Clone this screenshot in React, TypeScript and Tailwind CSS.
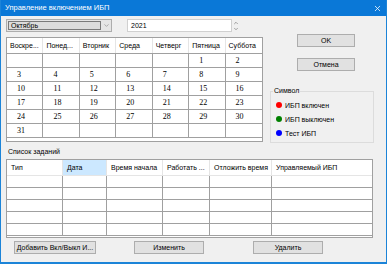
import { X, ChevronDown, ChevronUp } from 'lucide-react';

const days = ['Воскре...', 'Понед...', 'Вторник', 'Среда', 'Четверг', 'Пятница', 'Суббота'];

// October 2021 starts on Friday
const weeks: (number | null)[][] = [
  [null, null, null, null, null, 1, 2],
  [3, 4, 5, 6, 7, 8, 9],
  [10, 11, 12, 13, 14, 15, 16],
  [17, 18, 19, 20, 21, 22, 23],
  [24, 25, 26, 27, 28, 29, 30],
  [31, null, null, null, null, null, null],
];

const taskCols = [
  { title: 'Тип', w: 'w-[56px]' },
  { title: 'Дата', w: 'w-[44px]', active: true },
  { title: 'Время начала', w: 'w-[56px]' },
  { title: 'Работать ...', w: 'w-[47px]' },
  { title: 'Отложить время', w: 'w-[62px]' },
  { title: 'Управляемый ИБП', w: 'flex-1' },
];

function Btn({ label, className }: { label: string; className: string }) {
  return (
    <div
      className={`flex h-[13px] items-center justify-center overflow-hidden whitespace-nowrap border border-[#adadad] bg-[#e1e1e1] text-[7px] leading-none text-black ${className}`}
    >
      {label}
    </div>
  );
}

export default function App() {
  return (
    <div
      className="flex h-[264px] w-[387px] flex-col overflow-hidden whitespace-nowrap border-x border-b-2 border-[#1c84d8] bg-[#f0f0f0] text-black"
      style={{ fontFamily: '"Liberation Sans", Arial, sans-serif' }}
    >
      {/* Title bar */}
      <div className="-mx-px flex h-[16px] shrink-0 items-center justify-between bg-[#0a78d7] pl-[5px] pr-[5px] text-white">
        <span className="text-[7.5px] leading-none">Управление включением ИБП</span>
        <X className="h-[9px] w-[9px]" strokeWidth={2} />
      </div>

      {/* Top area */}
      <div className="flex pl-[5px]">
        <div className="flex w-[257px] flex-col">
          <div className="mt-[3px] flex h-[13px] items-center">
            <div className="flex h-full w-[106px] items-center border border-[#adadad] bg-[#e5e5e5]">
              <div className="ml-[1px] flex h-[9px] w-[93px] items-center border border-[#7a7a7a] bg-[#dcdcdc] pl-[2px] text-[7px] leading-none">
                Октябрь
              </div>
              <div className="flex flex-1 items-center justify-center">
                <ChevronDown className="h-[7px] w-[7px] text-[#606060]" strokeWidth={1.5} />
              </div>
            </div>
            <div className="ml-[15px] flex h-[13px] w-[105px] items-center border border-[#d0d0d0] bg-white pl-[3px] text-[7px] leading-none">
              2021
            </div>
            <div className="ml-[1px] flex flex-col">
              <ChevronUp className="h-[6px] w-[6px] text-[#505050]" strokeWidth={2} />
              <ChevronDown className="h-[6px] w-[6px] text-[#505050]" strokeWidth={2} />
            </div>
          </div>

          {/* Calendar */}
          <div className="mt-[5px] flex h-[105px] w-[257px] flex-col border border-[#a0a0a0] bg-white">
            <div className="grid h-[16px] grid-cols-7 border-b border-[#a0a0a0]">
              {days.map((d, i) => (
                <div
                  key={d}
                  className={`flex items-center overflow-hidden pl-[3px] text-[7px] leading-none ${i < 6 ? 'border-r border-[#e5e5e5]' : ''}`}
                >
                  {d}
                </div>
              ))}
            </div>
            {weeks.map((w, r) => (
              <div key={r} className="grid h-[14px] grid-cols-7 border-b border-[#a0a0a0]">
                {w.map((n, c) => (
                  <div
                    key={c}
                    className={`flex items-center pl-[10px] text-[8px] leading-none ${c < 6 ? 'border-r border-[#a0a0a0]' : ''}`}
                    style={{ fontFamily: '"Liberation Serif", "Times New Roman", serif' }}
                  >
                    {n ?? ''}
                  </div>
                ))}
              </div>
            ))}
          </div>
        </div>

        {/* Right column */}
        <div className="ml-[7px] flex w-[104px] flex-col">
          <Btn label="OK" className="ml-[27px] mt-[18px] w-[58px]" />
          <Btn label="Отмена" className="ml-[27px] mt-[11px] w-[58px]" />
          <div className="relative mt-[20px] flex h-[52px] flex-col gap-[4px] border border-[#dcdcdc] pl-[5px] pt-[8px]">
            <span className="absolute -top-[5px] left-[2px] bg-[#f0f0f0] px-[1px] text-[7px] leading-none">
              Символ
            </span>
            {[
              ['bg-[#ff0000]', 'ИБП включен'],
              ['bg-[#008000]', 'ИБП выключен'],
              ['bg-[#0000ff]', 'Тест ИБП'],
            ].map(([c, t]) => (
              <div key={t} className="flex h-[10px] items-center gap-[3px]">
                <span className={`h-[6px] w-[6px] rounded-full ${c}`} />
                <span className="text-[7px] leading-none">{t}</span>
              </div>
            ))}
          </div>
        </div>
      </div>

      {/* Task list */}
      <div className="mt-[5px] pl-[7px] text-[7px] leading-none">Список заданий</div>
      <div className="ml-[5px] mt-[4px] flex h-[79px] w-[367px] flex-col border border-[#a0a0a0] bg-white">
        <div className="flex h-[16px] border-b border-[#e5e5e5]">
          {taskCols.map((c, i) => (
            <div
              key={c.title}
              className={`flex items-center overflow-hidden pl-[4px] text-[7px] leading-none ${c.w} ${c.active ? 'bg-[#cce8ff]' : ''} ${i < 5 ? 'border-r border-[#e5e5e5]' : ''}`}
            >
              {c.title}
            </div>
          ))}
        </div>
        {[0, 1, 2, 3, 4].map((r) => (
          <div key={r} className="flex h-[12px] border-b border-[#a0a0a0]">
            {taskCols.map((c, i) => (
              <div key={c.title} className={`${c.w} ${i < 5 ? 'border-r border-[#a0a0a0]' : ''}`} />
            ))}
          </div>
        ))}
      </div>

      {/* Buttons */}
      <div className="mt-[3px] flex">
        <Btn label="Добавить Вкл/Выкл И..." className="ml-[13px] w-[82px]" />
        <Btn label="Изменить" className="ml-[38px] w-[70px]" />
        <Btn label="Удалить" className="ml-[49px] w-[70px]" />
      </div>
    </div>
  );
}
